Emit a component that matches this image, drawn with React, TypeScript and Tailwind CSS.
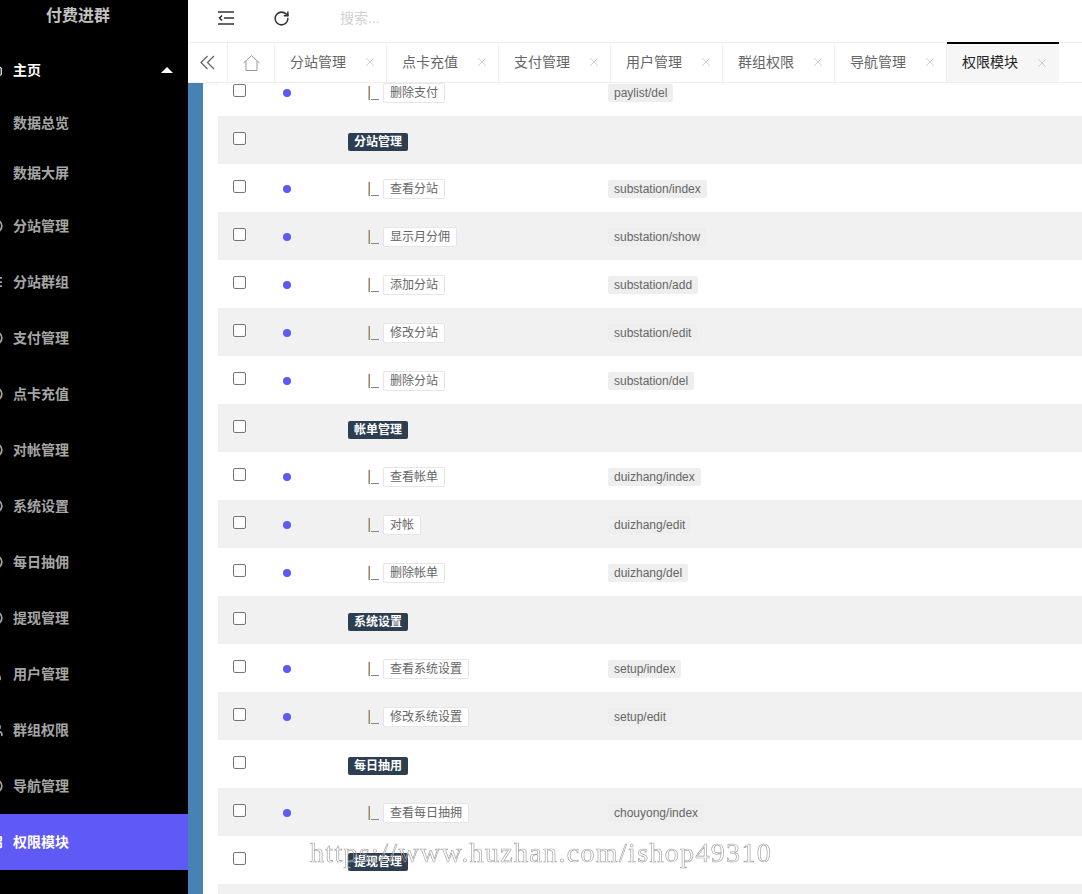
import { RotateCw, User, Users, X, Circle, List, LayoutGrid, Compass, Home } from 'lucide-react';

const subItems = ['数据总览', '数据大屏'];

const navItems = [
  { label: '分站管理', icon: Circle },
  { label: '分站群组', icon: List },
  { label: '支付管理', icon: Circle },
  { label: '点卡充值', icon: Circle },
  { label: '对帐管理', icon: Circle },
  { label: '系统设置', icon: Circle },
  { label: '每日抽佣', icon: Circle },
  { label: '提现管理', icon: Circle },
  { label: '用户管理', icon: User },
  { label: '群组权限', icon: Users },
  { label: '导航管理', icon: Compass },
  { label: '权限模块', icon: LayoutGrid, active: true },
];

const tabs = ['分站管理', '点卡充值', '支付管理', '用户管理', '群组权限', '导航管理', '权限模块'];

type Row =
  | { kind: 'group'; name: string }
  | { kind: 'item'; name: string; rule: string };

const rows: Row[] = [
  { kind: 'item', name: '删除支付', rule: 'paylist/del' },
  { kind: 'group', name: '分站管理' },
  { kind: 'item', name: '查看分站', rule: 'substation/index' },
  { kind: 'item', name: '显示月分佣', rule: 'substation/show' },
  { kind: 'item', name: '添加分站', rule: 'substation/add' },
  { kind: 'item', name: '修改分站', rule: 'substation/edit' },
  { kind: 'item', name: '删除分站', rule: 'substation/del' },
  { kind: 'group', name: '帐单管理' },
  { kind: 'item', name: '查看帐单', rule: 'duizhang/index' },
  { kind: 'item', name: '对帐', rule: 'duizhang/edit' },
  { kind: 'item', name: '删除帐单', rule: 'duizhang/del' },
  { kind: 'group', name: '系统设置' },
  { kind: 'item', name: '查看系统设置', rule: 'setup/index' },
  { kind: 'item', name: '修改系统设置', rule: 'setup/edit' },
  { kind: 'group', name: '每日抽用' },
  { kind: 'item', name: '查看每日抽拥', rule: 'chouyong/index' },
  { kind: 'group', name: '提现管理' },
  { kind: 'item', name: '', rule: '' },
];

function Sidebar() {
  return (
    <aside className="w-[188px] shrink-0 bg-black">
      <div className="h-[42px] pb-[10px] pr-[32px] flex items-center justify-center text-[16px] font-bold text-[#c2c2c2]">
        付费进群
      </div>
      <div className="h-[56px] flex items-center text-[14px] font-bold text-white">
        <Home size={14} className="ml-[-11px] mr-[10px] shrink-0" />
        <span>主页</span>
        <span className="ml-[120px] h-0 w-0 border-x-[6px] border-b-[6px] border-x-transparent border-b-white" />
      </div>
      {subItems.map((s) => (
        <div key={s} className="h-[50px] flex items-center pl-[13px] text-[14px] font-bold text-[#a6a6a6]">
          {s}
        </div>
      ))}
      {navItems.map(({ label, icon: Icon, active }) => (
        <div
          key={label}
          className={
            active
              ? 'h-[56px] flex items-center text-[14px] font-bold text-white bg-[#5f5af6]'
              : 'h-[56px] flex items-center text-[14px] font-bold text-[#a6a6a6]'
          }
        >
          <Icon size={14} strokeWidth={3} className="ml-[-11px] mr-[10px] shrink-0" />
          <span>{label}</span>
        </div>
      ))}
    </aside>
  );
}

function TopBar() {
  return (
    <div className="h-[42px] pb-[6px] flex items-center pl-[30px] bg-white">
      <svg width="16" height="14" viewBox="0 0 16 14" className="text-[#333]" fill="none" stroke="currentColor" strokeWidth="1.6">
        <path d="M0 1H16M6 7H16M0 13H16" />
        <path d="M4 4.5L1.5 7L4 9.5" />
      </svg>
      <RotateCw size={17} strokeWidth={2.2} className="ml-[39px] text-[#333]" />
      <span className="ml-[50px] text-[14px] text-[#d2d2d2]">搜索...</span>
    </div>
  );
}

function TabBar() {
  return (
    <div className="h-[41px] flex bg-white border-t border-b border-[#eeeeee] shadow-[0_1px_2px_rgba(0,0,0,0.05)]">
      <div className="w-[40px] flex items-center justify-center border-r border-[#f0f0f0] text-[#666]">
        <svg width="15" height="15" viewBox="0 0 15 15" fill="none" stroke="currentColor" strokeWidth="1.3">
          <path d="M7.5 1L1 7.5L7.5 14" />
          <path d="M14 1L7.5 7.5L14 14" />
        </svg>
      </div>
      <div className="w-[47px] flex items-center justify-center border-r border-[#f0f0f0] text-[#999]">
        <svg width="17" height="16" viewBox="0 0 17 16" fill="none" stroke="currentColor" strokeWidth="1">
          <path d="M0.5 8L8.5 0.7L16.5 8" />
          <path d="M3 6V15.5H14V6" />
        </svg>
      </div>
      {tabs.map((t, i) => {
        const active = i === tabs.length - 1;
        return (
          <div
            key={t}
            className={
              active
                ? 'w-[112px] -mt-px pb-[1px] flex items-center pl-[15px] text-[14px] text-[#222] bg-[#f6f6f6] border-t-2 border-black'
                : 'w-[112px] pb-[1px] flex items-center pl-[15px] text-[14px] text-[#666] border-r border-[#f0f0f0]'
            }
          >
            <span>{t}</span>
            <X size={14} strokeWidth={1} className="ml-[17px] text-[#aaa]" />
          </div>
        );
      })}
    </div>
  );
}

function PermissionRow({ row, striped }: { row: Row; striped: boolean }) {
  return (
    <div className={striped ? 'h-[48px] flex items-center bg-[#f1f1f1]' : 'h-[48px] flex items-center bg-white'}>
      <div className="w-[65px] pl-[15px] flex items-center">
        <span className="block w-[13px] h-[13px] -mt-[4px] rounded-[2px] border border-[#767676] bg-white" />
      </div>
      <div className="w-[65px] flex items-center">
        {row.kind === 'item' && row.name && <span className="block mt-[2px] w-2 h-2 rounded-full bg-[#5f5af6]" />}
      </div>
      {row.kind === 'group' ? (
        <span className="h-[18px] mt-[3px] px-[6px] flex items-center rounded-[2px] bg-[#2c3e50] text-[12px] font-bold text-white">
          {row.name}
        </span>
      ) : row.name ? (
        <>
          <span className="w-[260px] mt-[2px] flex items-center text-[12px] text-[#666] pl-[20px]">
            <svg width="11" height="14" viewBox="0 0 11 14" className="mr-[4px] shrink-0">
              <rect x="0" y="0" width="1" height="14" fill="#e3b98a" />
              <rect x="1" y="0" width="1" height="14" fill="#888888" />
              <rect x="3" y="13" width="8" height="1" fill="#888888" />
            </svg>
            <span className="h-[20px] px-[6px] flex items-center rounded-[2px] border border-[#e6e6e6] bg-white">
              {row.name}
            </span>
          </span>
          <span className="h-[18px] mt-[2px] px-[6px] flex items-center rounded-[2px] bg-[#eeeeee] text-[12px] text-[#666]">
            {row.rule}
          </span>
        </>
      ) : null}
    </div>
  );
}

export default function App() {
  return (
    <div
      className="h-[894px] w-[1082px] flex overflow-hidden relative bg-white"
      style={{ fontFamily: '"Liberation Sans", "Noto Sans CJK SC", sans-serif' }}
    >
      <Sidebar />
      <main className="flex-1 min-w-0 flex flex-col">
        <TopBar />
        <TabBar />
        <div className="flex-1 flex min-h-0 overflow-hidden">
          <div className="w-[15px] shrink-0 bg-[#4682b4]" />
          <div className="flex-1 min-w-0 pl-[15px] overflow-hidden">
            <div className="-mt-[15px]">
              {rows.map((r, i) => (
                <PermissionRow key={i} row={r} striped={i % 2 === 1} />
              ))}
            </div>
          </div>
        </div>
      </main>
      <div
        className="absolute left-[310px] top-[832px] text-[28px] tracking-[1.33px] text-transparent [-webkit-text-stroke:0.7px_#a8a8a8] [will-change:transform] pointer-events-none whitespace-nowrap"
        style={{ fontFamily: '"Liberation Serif", serif' }}
      >
        https://www.huzhan.com/ishop49310
      </div>
    </div>
  );
}
